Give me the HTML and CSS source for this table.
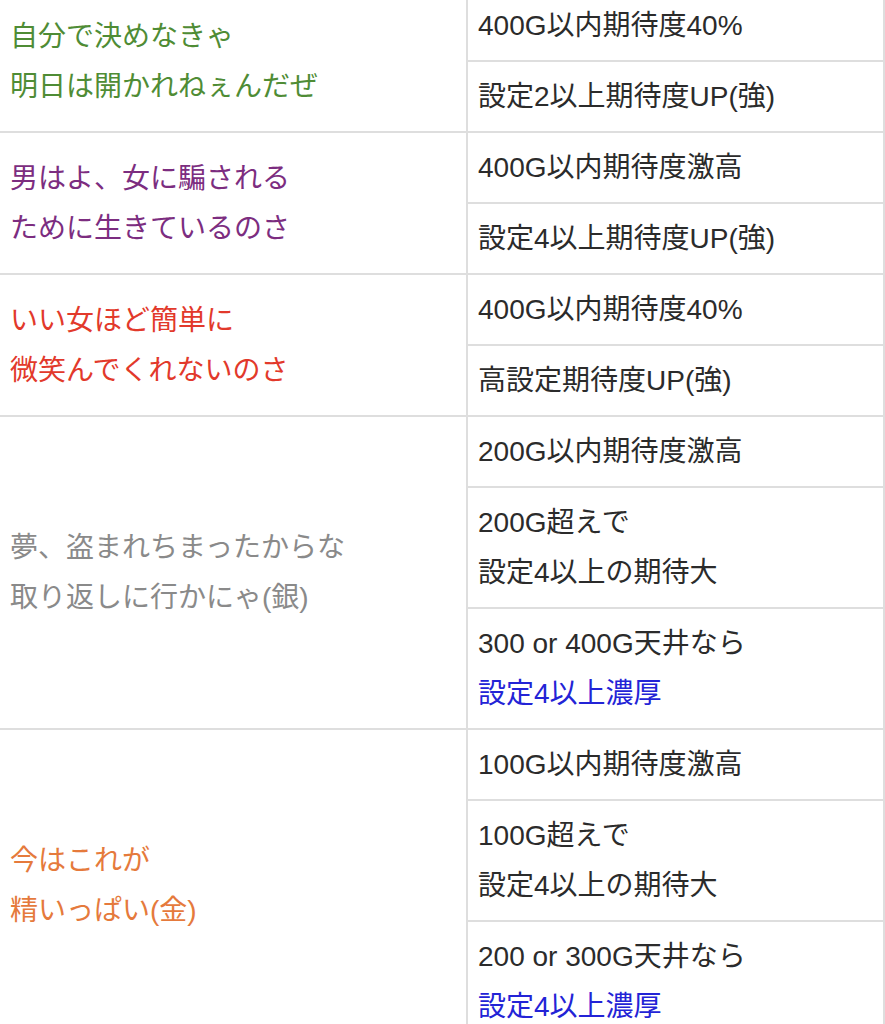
FILE: index.html
```html
<!DOCTYPE html>
<html lang="ja">
<head>
<meta charset="utf-8">
<title>table</title>
<link rel="stylesheet" href="styles.css">
</head>
<body>
<table class="tbl">
  <colgroup><col class="c1"><col class="c2"></colgroup>
  <tr>
    <td rowspan="2" class="lbl green">自分で決めなきゃ<br>明日は開かれねぇんだぜ</td>
    <td class="val">400G以内期待度40%</td>
  </tr>
  <tr><td class="val">設定2以上期待度UP(強)</td></tr>
  <tr>
    <td rowspan="2" class="lbl purple">男はよ、女に騙される<br>ために生きているのさ</td>
    <td class="val">400G以内期待度激高</td>
  </tr>
  <tr><td class="val">設定4以上期待度UP(強)</td></tr>
  <tr>
    <td rowspan="2" class="lbl red">いい女ほど簡単に<br>微笑んでくれないのさ</td>
    <td class="val">400G以内期待度40%</td>
  </tr>
  <tr><td class="val">高設定期待度UP(強)</td></tr>
  <tr>
    <td rowspan="3" class="lbl gray">夢、盗まれちまったからな<br>取り返しに行かにゃ(銀)</td>
    <td class="val">200G以内期待度激高</td>
  </tr>
  <tr><td class="val">200G超えで<br>設定4以上の期待大</td></tr>
  <tr><td class="val">300 or 400G天井なら<br><span class="blue">設定4以上濃厚</span></td></tr>
  <tr>
    <td rowspan="3" class="lbl orange">今はこれが<br>精いっぱい(金)</td>
    <td class="val">100G以内期待度激高</td>
  </tr>
  <tr><td class="val">100G超えで<br>設定4以上の期待大</td></tr>
  <tr><td class="val">200 or 300G天井なら<br><span class="blue">設定4以上濃厚</span></td></tr>
</table>
</body>
</html>
```
FILE: styles.css
```css
html, body {
  margin: 0;
  padding: 0;
  background: #ffffff;
}
body {
  font-family: "Liberation Sans", "Noto Sans CJK JP", sans-serif;
  color: #333333;
  overflow: hidden;
}
.tbl {
  border-collapse: collapse;
  table-layout: fixed;
  width: 887px;
  margin: -11px 0 0 -2px;
}
.c1 { width: 468px; }
.c2 { width: 417px; }
.tbl td {
  border: 2px solid #dedede;
  line-height: 50px;
  padding: 10px 10px 9px 10px;
}
.lbl {
  font-size: 28px;
  vertical-align: middle;
}
.val {
  font-size: 28px;
  vertical-align: top;
  color: #2b2b2b;
}
.green { color: #4f8c35; }
.purple { color: #7c2d80; }
.red { color: #e2392b; }
.gray { color: #8a8a8a; }
.orange { color: #e57a3c; }
.blue { color: #2323d6; }
```
